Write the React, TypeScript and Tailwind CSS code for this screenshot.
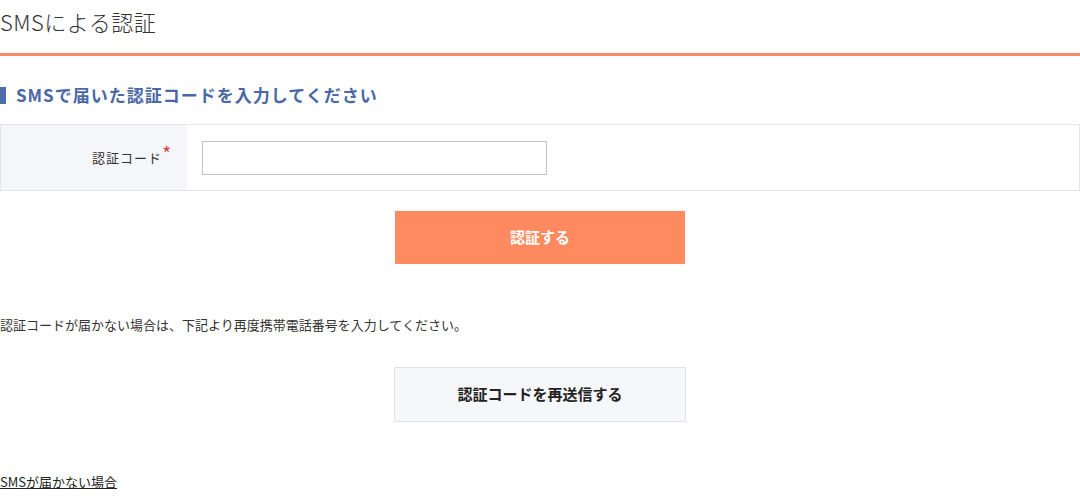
import React from 'react';

const FONT = "font-['Noto_Sans_CJK_JP','Noto_Sans',sans-serif]";

export default function App() {
  return (
    <div className={`w-[1080px] bg-white text-[#333] ${FONT}`}>
      {/* ページタイトル */}
      <h1 className="text-[22px] leading-[32px] font-light tracking-[0.5px] text-[#333] pt-[5px] pb-[16px] border-b-[3px] border-[#f98a68]">
        SMSによる認証
      </h1>

      <h2 className="mt-[29px] flex items-center gap-[10px] text-[17px] font-bold leading-[20px] tracking-[1px] text-[#4a68a6]">
        <span className="w-[6px] h-[17px] bg-[#4f6cab]" />
        SMSで届いた認証コードを入力してください
      </h2>

      {/* 入力フォーム */}
      <div className="mt-[19px] flex border border-[#e6e6e6] h-[67px]">
        <div className="w-[186px] bg-[#f5f6fa] flex items-center justify-end pr-[16px] text-[13px] tracking-[1px]">
          <span>認証コード</span>
          <span className="text-[#e03c31] text-[19px] leading-none -mt-[10px] tracking-normal">*</span>
        </div>
        <div className="flex-1 flex items-center pl-[15px]">
          <input type="text" className="w-[345px] h-[34px] border border-[#c4c4c4] bg-white outline-none px-2" />
        </div>
      </div>

      <div className="flex justify-center mt-[20px]">
        <button className="w-[290px] h-[53px] bg-[#ff8a60] text-white text-[15px] font-bold">
          認証する
        </button>
      </div>

      <p className="mt-[51px] text-[13px] leading-[20px]">
        認証コードが届かない場合は、下記より再度携帯電話番号を入力してください。
      </p>

      <div className="flex justify-center mt-[32px]">
        <button className="w-[292px] h-[55px] bg-[#f6f7fa] border border-[#e3e3e3] text-[15px] font-bold text-[#222]">
          認証コードを再送信する
        </button>
      </div>

      <div className="mt-[48px] pb-4 leading-[20px]">
        <a href="#" className="text-[13px] underline text-[#222]">SMSが届かない場合</a>
      </div>
    </div>
  );
}
